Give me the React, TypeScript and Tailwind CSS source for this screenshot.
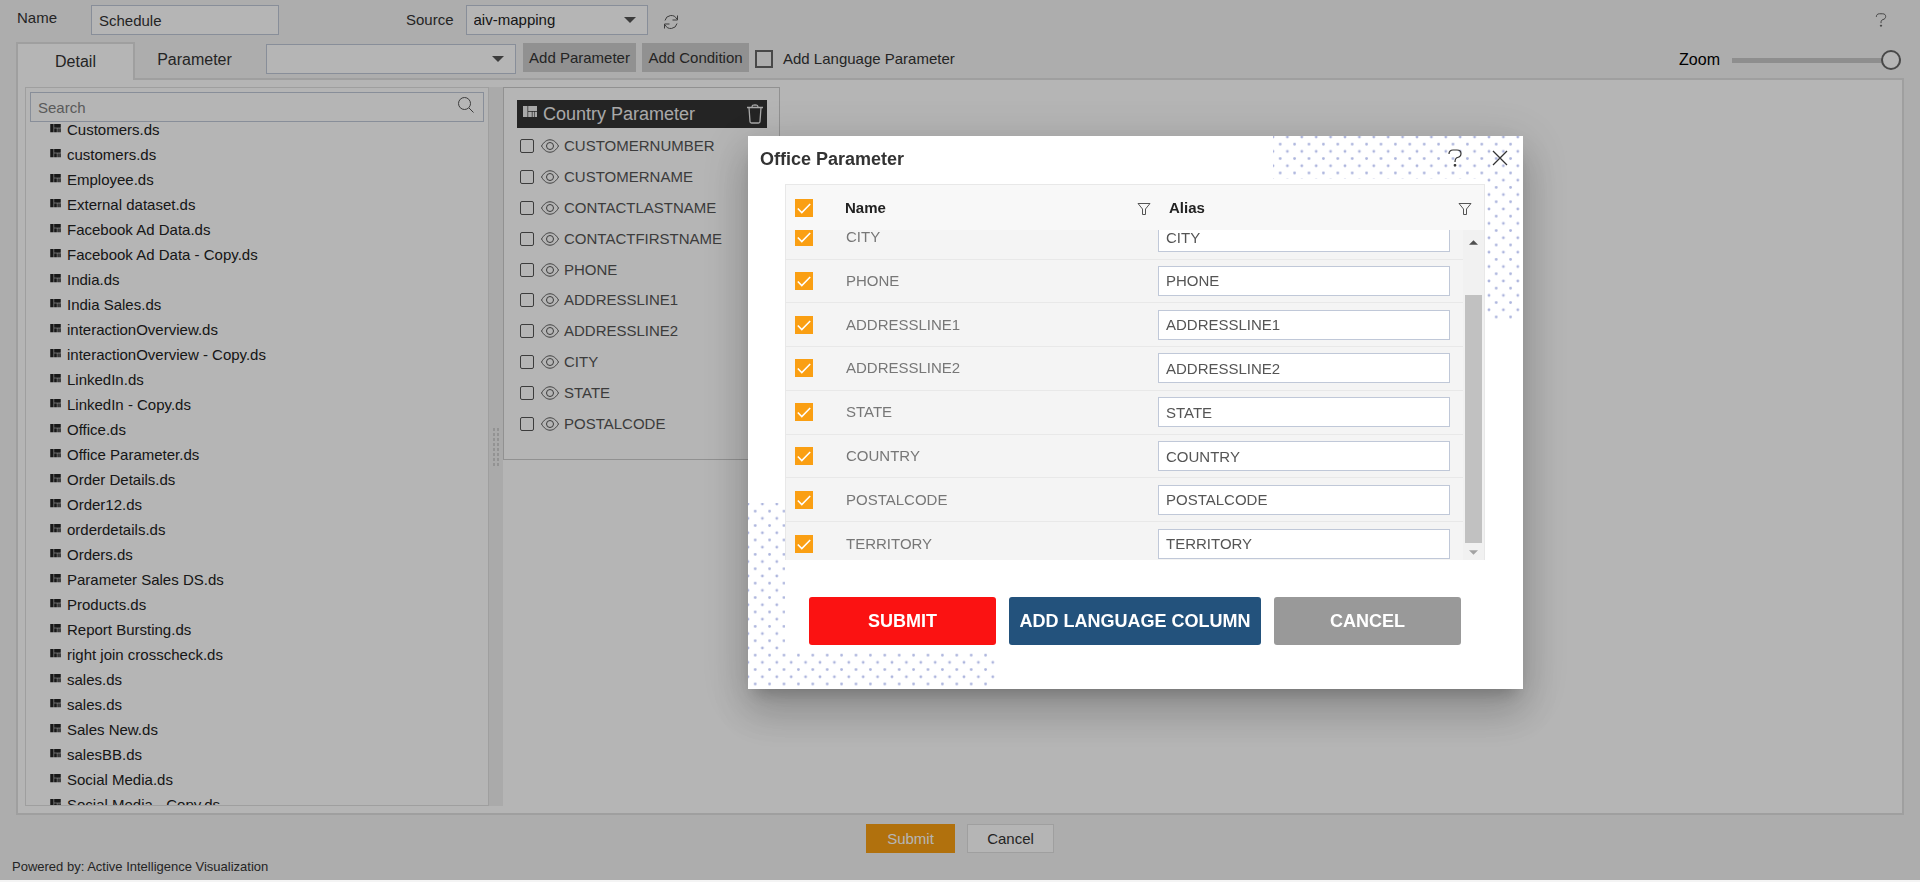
import { ReactNode, useState } from "react";
import clsx from "clsx";

const datasets = [
  "Customers.ds",
  "customers.ds",
  "Employee.ds",
  "External dataset.ds",
  "Facebook Ad Data.ds",
  "Facebook Ad Data - Copy.ds",
  "India.ds",
  "India Sales.ds",
  "interactionOverview.ds",
  "interactionOverview - Copy.ds",
  "LinkedIn.ds",
  "LinkedIn - Copy.ds",
  "Office.ds",
  "Office Parameter.ds",
  "Order Details.ds",
  "Order12.ds",
  "orderdetails.ds",
  "Orders.ds",
  "Parameter Sales DS.ds",
  "Products.ds",
  "Report Bursting.ds",
  "right join crosscheck.ds",
  "sales.ds",
  "sales.ds",
  "Sales New.ds",
  "salesBB.ds",
  "Social Media.ds",
  "Social Media - Copy.ds",
];

const countryFields = [
  "CUSTOMERNUMBER",
  "CUSTOMERNAME",
  "CONTACTLASTNAME",
  "CONTACTFIRSTNAME",
  "PHONE",
  "ADDRESSLINE1",
  "ADDRESSLINE2",
  "CITY",
  "STATE",
  "POSTALCODE",
];

const officeFields = [
  "CITY",
  "PHONE",
  "ADDRESSLINE1",
  "ADDRESSLINE2",
  "STATE",
  "COUNTRY",
  "POSTALCODE",
  "TERRITORY",
];

const DatasetIcon = ({ className }: { className: string }) => (
  <svg viewBox="0 0 14 12" fill="currentColor" className={className} aria-hidden="true">
    <path d="M0 0h4.500v11H0zM5.200 0H14v5H5.200zM5.200 5.800h3.600V11H5.200zM9.500 5.800h1.900V11H9.500zM12 5.800h2V11h-2z" />
  </svg>
);

const RefreshIcon = () => (
  <svg viewBox="0 0 16 16" fill="none" stroke="currentColor" className="h-4 w-4" aria-hidden="true">
    <path d="M2 6.500a6.300 6.300 0 0 1 11.800-1.500M14.500 1.500v4.500h-5M14 9.500a6.300 6.300 0 0 1-11.800 1.500M1.500 14.500V10h5" />
  </svg>
);

const SearchIcon = () => (
  <svg viewBox="0 0 16 16" fill="none" stroke="currentColor" className="h-4 w-4" aria-hidden="true">
    <circle cx="6.500" cy="6.500" r="6" />
    <path d="m11 11 4.500 4.500" />
  </svg>
);

const TrashIcon = () => (
  <svg viewBox="0 0 16 20" fill="none" stroke="currentColor" strokeWidth="1.300" className="h-5 w-4" aria-hidden="true">
    <path d="M0 3.500h16M5 3.500C5 1 6 1 8 1s3 0 3 2.500M2 3.500l1 14c0 1 .5 1.500 1.500 1.500h7c1 0 1.500-.5 1.500-1.500l1-14" />
  </svg>
);

const EyeIcon = () => (
  <svg viewBox="0 0 18 14" fill="none" stroke="currentColor" className="h-3.5 w-[18px]" aria-hidden="true">
    <path d="M.5 7C3 2.800 5.800.8 9 .8S15 2.800 17.500 7C15 11.200 12.200 13.200 9 13.200S3 11.200.5 7z" />
    <circle cx="9" cy="7" r="3.500" />
  </svg>
);

const QuestionIcon = ({ className }: { className: string }) => (
  <svg viewBox="0 0 14 18" fill="none" stroke="currentColor" strokeWidth="1.200" className={className} aria-hidden="true">
    <path d="M1 5c0-2.500 1.500-4 4-4h4c2.500 0 4 1.300 4 3.500S11.500 8 9.500 8.500C7.500 9 7 10 7 13" />
    <circle cx="7" cy="16.300" r=".8" fill="currentColor" />
  </svg>
);

const CloseIcon = () => (
  <svg viewBox="0 0 16 16" fill="none" stroke="currentColor" strokeWidth="1.300" className="h-4 w-4" aria-hidden="true">
    <path d="m1 1 14 14M15 1 1 15" />
  </svg>
);

const FilterIcon = () => (
  <svg viewBox="0 0 14 12" fill="none" stroke="#555" className="h-3 w-3.5" aria-hidden="true">
    <path d="M1 .5h12L8.500 6v5.500h-3V6z" />
  </svg>
);

const Caret = ({ className }: { className: string }) => (
  <svg viewBox="0 0 12 6" fill="currentColor" className={className} aria-hidden="true">
    <path d="M0 0h12L6 6z" />
  </svg>
);

const DotPattern = ({ id, className }: { id: string; className: string }) => (
  <svg className={clsx("absolute h-[186px] w-[250px]", className)} aria-hidden="true">
    <defs>
      <pattern id={id} width="14.400" height="14.400" y="1" patternUnits="userSpaceOnUse">
        <g fill="#adb5dd">
          <circle cx="0" cy="0" r="1.400" />
          <circle cx="14.400" cy="0" r="1.400" />
          <circle cx="0" cy="14.400" r="1.400" />
          <circle cx="14.400" cy="14.400" r="1.400" />
          <circle cx="7.200" cy="7.200" r="1.400" />
        </g>
      </pattern>
    </defs>
    <rect width="250" height="186" fill={`url(#${id})`} />
  </svg>
);

const OrangeCheckbox = ({ label }: { label: string }) => {
  const [checked, setChecked] = useState(true);

  return (
    <label className="grid h-[18px] w-[18px]">
      <input
        type="checkbox"
        aria-label={label}
        checked={checked}
        onChange={(event) => setChecked(event.target.checked)}
        className="col-start-1 row-start-1 h-[18px] w-[18px] appearance-none border border-[#fa9f13] bg-white checked:bg-[#fa9f13]"
      />
      {checked && (
        <svg
          viewBox="0 0 18 18"
          fill="none"
          stroke="#fff"
          strokeWidth="1.600"
          className="pointer-events-none col-start-1 row-start-1 h-[18px] w-[18px]"
          aria-hidden="true"
        >
          <path d="m2.800 9.500 4 4L15.200 5" />
        </svg>
      )}
    </label>
  );
};

const SelectBox = ({ id, label, className, children }: { id: string; label?: string; className: string; children?: ReactNode }) => (
  <div className={clsx("grid h-[30px] items-center text-[#555]", className)}>
    <select
      id={id}
      aria-label={label}
      className="col-start-1 row-start-1 h-[30px] w-full appearance-none border border-[#c0c8d8] bg-white px-[7px] text-[15px] text-[#222]"
    >
      {children}
    </select>
    <Caret className="pointer-events-none col-start-1 row-start-1 mr-3 h-1.5 w-3 justify-self-end" />
  </div>
);

const TopBar = () => (
  <div className="flex h-[42px] shrink-0 items-start pt-[5px] pl-[17px]">
    <label htmlFor="name" className="w-[74px] leading-[26px]">
      Name
    </label>
    <input
      id="name"
      type="text"
      defaultValue="Schedule"
      className="h-[30px] w-[188px] border border-[#c0c8d8] bg-white px-[7px]"
    />
    <label htmlFor="source" className="ml-[127px] leading-[30px]">
      Source
    </label>
    <SelectBox id="source" className="ml-3 w-[182px]">
      <option>aiv-mapping</option>
    </SelectBox>
    <button type="button" aria-label="Refresh" className="mt-[9px] ml-[15px] text-[#555]">
      <RefreshIcon />
    </button>
    <button type="button" aria-label="Help" className="mt-2 mr-[33px] ml-auto text-[#555]">
      <QuestionIcon className="h-[14px] w-3" />
    </button>
  </div>
);

const Toolbar = () => (
  <div className="flex h-9 shrink-0 items-start">
    <button
      type="button"
      className="z-10 h-[38px] w-[119px] shrink-0 border-2 border-b-0 border-[#e0e0e0] bg-white text-base"
    >
      Detail
    </button>
    <button type="button" className="h-9 w-[119px] text-base">
      Parameter
    </button>
    <SelectBox id="parameter" label="Parameter" className="mt-0.5 ml-3 w-[250px]" />
    <button type="button" className="mt-px ml-[7px] h-[29px] w-[113px] bg-[#ccc]">
      Add Parameter
    </button>
    <button type="button" className="mt-px ml-1.5 h-[29px] w-[107px] bg-[#ccc]">
      Add Condition
    </button>
    <label className="ml-1.5 flex h-[34px] items-center gap-2.5">
      <input type="checkbox" className="h-[18px] w-[18px] appearance-none border-2 border-[#666]" />
      Add Language Parameter
    </label>
    <label className="mr-[3px] ml-auto flex h-9 items-center gap-3 text-base text-black">
      Zoom
      <input
        type="range"
        defaultValue="100"
        className="h-5 w-[169px] appearance-none bg-transparent [&::-webkit-slider-runnable-track]:h-[5px] [&::-webkit-slider-runnable-track]:bg-[#c8c8c8] [&::-webkit-slider-thumb]:-mt-2 [&::-webkit-slider-thumb]:h-5 [&::-webkit-slider-thumb]:w-5 [&::-webkit-slider-thumb]:appearance-none [&::-webkit-slider-thumb]:rounded-full [&::-webkit-slider-thumb]:border-2 [&::-webkit-slider-thumb]:border-[#666] [&::-webkit-slider-thumb]:bg-white"
      />
    </label>
  </div>
);

const DatasetList = () => (
  <div className="flex w-[464px] shrink-0 flex-col border border-[#e0e0e0] p-1 pb-0">
    <div className="grid shrink-0 items-center">
      <input
        type="text"
        aria-label="Search"
        placeholder="Search"
        className="col-start-1 row-start-1 h-[30px] border border-[#c0c8d8] bg-white px-[7px] placeholder:text-[#808080]"
      />
      <span className="col-start-1 row-start-1 mr-2.5 mb-1 justify-self-end text-[#555]">
        <SearchIcon />
      </span>
    </div>
    <div className="mt-0.5 min-h-0 flex-1 overflow-hidden">
      <ul className="-mt-[7px]">
        {datasets.map((name, index) => (
          <li key={index} className="flex h-[25px] items-center gap-1.5 pl-5 text-[#222]">
            <DatasetIcon className="mb-[3px] h-[9px] w-[11px] text-[#222]" />
            {name}
          </li>
        ))}
      </ul>
    </div>
  </div>
);

const Splitter = () => (
  <div className="flex w-3.5 shrink-0 items-center justify-center bg-[#f0f0f0]">
    <div className="grid grid-cols-2 gap-0.5">
      {Array.from({ length: 16 }, (_, index) => (
        <span key={index} className="h-[3px] w-0.5 bg-[#d0d0d0]" />
      ))}
    </div>
  </div>
);

const CountryCard = () => (
  <div className="flex h-[373px] w-[277px] flex-col border border-[#ccc] bg-white px-[13px] pt-3">
    <div className="flex h-7 w-[250px] shrink-0 items-center bg-[#333] pr-1 pl-1.5 text-lg leading-7 text-[#eee]">
      <DatasetIcon className="mb-1 h-3 w-3.5" />
      <span className="ml-1.5">Country Parameter</span>
      <button type="button" aria-label="Delete" className="ml-auto">
        <TrashIcon />
      </button>
    </div>
    <ul className="mt-[3px] flex h-[308px] flex-col">
      {countryFields.map((field) => (
        <li key={field} className="flex flex-1 items-center pl-[3px] text-[#555]">
          <label className="flex items-center">
            <input
              type="checkbox"
              aria-label={field}
              className="h-3.5 w-3.5 appearance-none rounded-xs border border-[#555]"
            />
            <span className="ml-[7px]">
              <EyeIcon />
            </span>
            <span className="ml-[5px]">{field}</span>
          </label>
        </li>
      ))}
    </ul>
  </div>
);

const GridColumns = () => (
  <colgroup>
    <col className="w-[50px]" />
    <col />
    <col className="w-[315px]" />
  </colgroup>
);

const OfficeGrid = () => (
  <div className="border border-b-0 border-[#e8e8e8] bg-[#f4f4f4]">
    <div className="bg-[#f8f8f8] pr-[21px]">
      <table className="w-full table-fixed text-left text-[#222]">
        <GridColumns />
        <thead>
          <tr className="h-[45px]">
            <th className="pl-[9px]">
              <OrangeCheckbox label="Select all" />
            </th>
            <th className="pl-[9px]">
              <div className="-mr-[3px] flex items-center justify-between">
                Name
                <button type="button" aria-label="Filter name" className="mt-0.5">
                  <FilterIcon />
                </button>
              </div>
            </th>
            <th className="pl-[21px]">
              <div className="-mr-[9px] flex items-center justify-between">
                Alias
                <button type="button" aria-label="Filter alias" className="mt-0.5">
                  <FilterIcon />
                </button>
              </div>
            </th>
          </tr>
        </thead>
      </table>
    </div>
    <div className="flex h-[330px] overflow-hidden">
      <div className="flex-1">
        <table className="-mt-[14px] h-[350px] w-full table-fixed text-left">
          <GridColumns />
          <tbody>
            {officeFields.map((field) => (
              <tr key={field} className="border-b border-[#e8e8e8]">
                <td className="pl-[9px]">
                  <OrangeCheckbox label={`Select ${field}`} />
                </td>
                <td className="pl-2.5 text-[#777]">{field}</td>
                <td className="pl-2.5">
                  <input
                    type="text"
                    aria-label={`Alias for ${field}`}
                    defaultValue={field}
                    className="block h-[30px] w-[292px] border border-[#c0c8d8] bg-white px-[7px] text-[#555]"
                  />
                </td>
              </tr>
            ))}
          </tbody>
        </table>
      </div>
      <div className="flex w-[21px] flex-col items-center bg-[#f1f1f1]">
        <Caret className="mt-2.5 h-[5px] w-[9px] rotate-180 text-[#505050]" />
        <div className="mt-[50px] h-[248px] w-[17px] bg-[#c1c1c1]" />
        <Caret className="mt-[7px] h-[5px] w-[9px] text-[#a3a3a3]" />
      </div>
    </div>
  </div>
);

const OfficeDialog = () => (
  <div
    role="dialog"
    aria-labelledby="dialog-title"
    className="relative h-[553px] w-[775px] shrink-0 bg-white shadow-[0_11px_15px_-7px_rgba(0,0,0,0.2),0_24px_38px_3px_rgba(0,0,0,0.14),0_9px_46px_8px_rgba(0,0,0,0.12)]"
  >
    <DotPattern id="dots-top" className="top-0 right-0" />
    <DotPattern id="dots-bottom" className="bottom-0 left-0" />
    <div className="relative">
      <div className="flex h-[43px] items-center pr-[15px] pl-3">
        <h2 id="dialog-title" className="mt-0.5 text-lg font-bold text-[#333]">
          Office Parameter
        </h2>
        <button type="button" aria-label="Help" className="ml-auto">
          <QuestionIcon className="h-[18px] w-3.5" />
        </button>
        <button type="button" aria-label="Close" className="ml-[30px]">
          <CloseIcon />
        </button>
      </div>
      <div className="mr-[38px] ml-[37px] bg-white pt-[5px]">
        <OfficeGrid />
        <div className="flex h-[90px] items-end justify-center gap-[13px] pb-[5px] text-lg font-bold text-white">
          <button type="button" className="h-12 w-[187px] rounded-[3px] bg-[#fb1212]">
            SUBMIT
          </button>
          <button type="button" className="h-12 w-[252px] rounded-[3px] bg-[#23527c]">
            ADD LANGUAGE COLUMN
          </button>
          <button type="button" className="h-12 w-[187px] rounded-[3px] bg-[#999]">
            CANCEL
          </button>
        </div>
      </div>
    </div>
  </div>
);

const App = () => {
  return (
    <div className="font-['Liberation_Sans',Arial,sans-serif] text-[15px] leading-5 text-[#333]">
      <div className="flex h-screen min-h-[640px] flex-col bg-[#f4f4f4]">
        <TopBar />
        <div className="flex min-h-0 flex-1 flex-col px-4">
          <Toolbar />
          <div className="flex min-h-0 flex-1 border-2 border-[#e0e0e0] bg-white p-[7px]">
            <DatasetList />
            <Splitter />
            <CountryCard />
          </div>
        </div>
        <div className="flex h-[42px] shrink-0 items-start justify-center gap-3 pt-[9px]">
          <button type="button" className="h-[29px] w-[89px] bg-[#fa9f13] text-white">
            Submit
          </button>
          <button type="button" className="h-[29px] w-[87px] border border-[#e0e0e0] bg-white">
            Cancel
          </button>
        </div>
        <footer className="h-[25px] shrink-0 pl-3 text-[13px] leading-5">
          Powered by: Active Intelligence Visualization
        </footer>
      </div>

      {/* Dialog layer */}
      <div className="fixed inset-x-0 top-0 bottom-0.5 z-20 flex items-start justify-center bg-black/29 pt-[136px] pl-[351px]">
        <OfficeDialog />
      </div>
    </div>
  );
};

export default App;
